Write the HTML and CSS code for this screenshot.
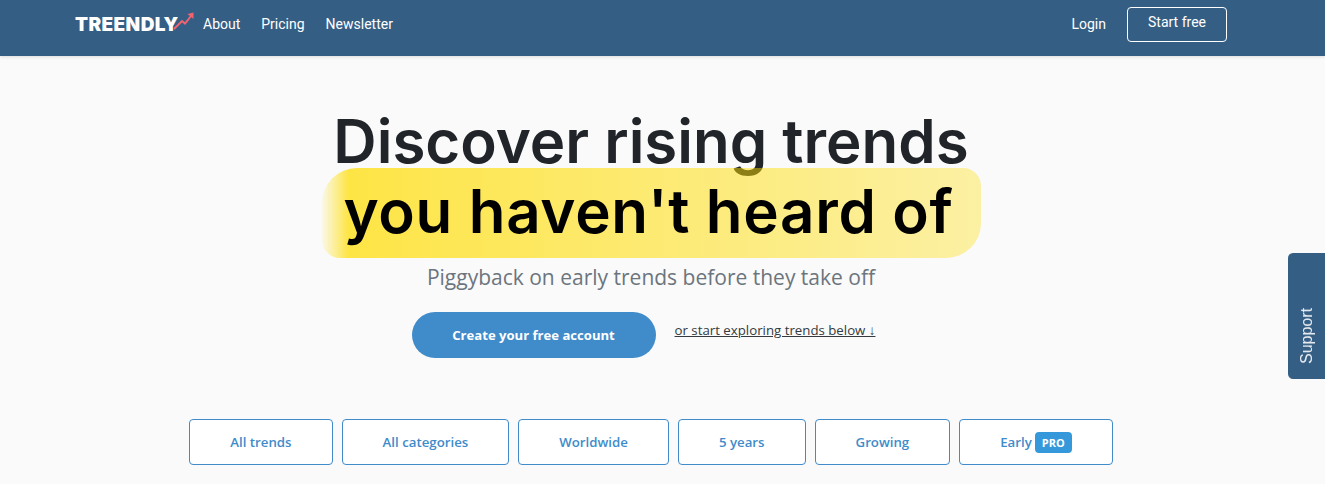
FILE: index.html
```html
<!DOCTYPE html>
<html lang="en">
<head>
  <meta charset="UTF-8" />
  <meta name="viewport" content="width=device-width, initial-scale=1.0" />
  <title>Treendly</title>
  <link rel="stylesheet" href="styles.css">
</head>
<body>
  <nav class="navbar">
    <div class="nav-left">
      <a class="logo" href="#">TREENDLY<svg class="logo-arrow" width="22" height="20" viewBox="0 0 22 20"><path d="M1 18 L9 10 L12 12.500 L18 5" fill="none" stroke="#f2636f" stroke-width="2"/><path d="M14.500 3 L20.500 1.500 L20.500 8 Z" fill="#f2636f"/></svg></a>
      <a class="nav-link" href="#">About</a>
      <a class="nav-link" href="#">Pricing</a>
      <a class="nav-link" href="#">Newsletter</a>
    </div>
    <div class="nav-right">
      <a class="nav-link" href="#">Login</a>
      <a class="start-btn" href="#">Start free</a>
    </div>
  </nav>

  <main class="hero">
    <h1 class="hero-title">Discover rising trends</h1>
    <div class="highlight">you haven't heard of</div>
    <p class="hero-sub">Piggyback on early trends before they take off</p>
    <div class="cta-row">
      <a class="cta-btn" href="#">Create your free account</a>
      <a class="explore-link" href="#">or start exploring trends below ↓</a>
    </div>
    <div class="filters">
      <button class="filter">All trends</button>
      <button class="filter">All categories</button>
      <button class="filter">Worldwide</button>
      <button class="filter">5 years</button>
      <button class="filter">Growing</button>
      <button class="filter">Early<span class="pro">PRO</span></button>
    </div>
  </main>

  <a class="support-tab" href="#">Support</a>
</body>
</html>
```

FILE: styles.css
```css
/* Global Styles */
html, body {
  height: 484px;
  overflow: hidden;
}
body {
  margin: 0;
  background: #fafafa;
  font-family: 'Open Sans', sans-serif;
}
a {
  text-decoration: none;
}
/* Navbar */
.navbar {
  display: flex;
  justify-content: space-between;
  align-items: center;
  height: 56px;
  box-sizing: border-box;
  padding: 0 98px 7px 75px;
  background: #355e85;
  box-shadow: 0 1px 3px rgba(0, 0, 0, 0.12);
}
.nav-left, .nav-right {
  display: flex;
  align-items: center;
}
.logo {
  display: flex;
  align-items: center;
  width: 128px;
  color: #fff;
  font-family: 'Inter', sans-serif;
  font-weight: 900;
  font-size: 19px;
  letter-spacing: 0.4px;
}
.logo-arrow {
  margin: -8px 0 0 -6px;
}
.nav-link {
  margin: 0 21px 2px 0;
  color: #fff;
  font-family: 'Roboto', sans-serif;
  font-size: 14px;
}
.start-btn {
  width: 100px;
  height: 35px;
  box-sizing: border-box;
  padding-top: 6px;
  text-align: center;
  color: #fff;
  font-family: 'Roboto', sans-serif;
  font-size: 14px;
  border: 1px solid #fff;
  border-radius: 4px;
}
/* Hero */
.hero {
  display: flex;
  flex-direction: column;
  align-items: center;
  padding-right: 23px;
}
.hero-title {
  margin: 45px 0 0;
  height: 67px;
  color: #212529;
  font-family: 'Inter', sans-serif;
  font-weight: 600;
  font-size: 60px;
  line-height: 80px;
}
.highlight {
  width: 659px;
  height: 90px;
  box-sizing: border-box;
  padding-right: 5px;
  text-align: center;
  color: #000;
  font-family: 'Inter', sans-serif;
  font-weight: 600;
  font-size: 60px;
  letter-spacing: 0.7px;
  line-height: 86px;
  border-radius: 35px 18px 35px 18px;
  background: linear-gradient(90deg, rgba(255, 221, 0, 0.08) 0, rgba(255, 221, 0, 0.72) 4%, rgba(255, 221, 0, 0.35) 100%);
}
.hero-sub {
  margin: 4px 0 0;
  color: #6c757d;
  font-size: 21px;
  line-height: 30px;
}
/* Call to action */
.cta-row {
  display: flex;
  align-items: flex-start;
  margin: 20px 15px 0 0;
}
.cta-btn {
  width: 244px;
  height: 46px;
  line-height: 46px;
  text-align: center;
  color: #fff;
  font-weight: 700;
  font-size: 13.100px;
  background: #408bca;
  border-radius: 23px;
}
.explore-link {
  margin: 9px 0 0 19px;
  color: #343a40;
  font-size: 13.250px;
  line-height: 18px;
  text-decoration: underline;
}
/* Filters */
.filters {
  display: flex;
  gap: 9px;
  margin-top: 61px;
}
.filter {
  display: flex;
  align-items: center;
  gap: 3px;
  height: 46px;
  padding: 0 40px;
  color: #408bca;
  font-family: 'Open Sans', sans-serif;
  font-weight: 600;
  font-size: 13.250px;
  background: #fff;
  border: 1px solid #408bca;
  border-radius: 4px;
}
.pro {
  padding: 0 7px;
  color: #fff;
  font-size: 11px;
  font-weight: 700;
  line-height: 21px;
  background: #3498db;
  border-radius: 4px;
}
/* Support tab */
.support-tab {
  position: fixed;
  top: 253px;
  right: 0;
  width: 37px;
  height: 126px;
  box-sizing: border-box;
  padding: 15px 2px 0 0;
  display: flex;
  align-items: center;
  justify-content: flex-start;
  writing-mode: vertical-rl;
  transform: rotate(180deg);
  color: #e9eef3;
  font-family: 'Liberation Sans', sans-serif;
  font-size: 16px;
  background: #355e85;
  border-radius: 0 5px 5px 0;
}
```
